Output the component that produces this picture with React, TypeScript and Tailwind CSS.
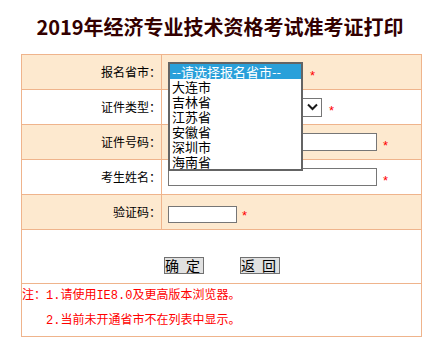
import React from "react";

const B = "border-[#efb48c]";

function Star({ ml = "ml-[7px]" }: { ml?: string }) {
  return (
    <span
      className={`${ml} text-[#ff0000] text-[13px] leading-[13px] translate-y-[3px] font-['Liberation_Sans',sans-serif]`}
    >
      *
    </span>
  );
}

function Label({ text }: { text: string }) {
  return (
    <div
      className={`w-[140px] shrink-0 border-r ${B} flex items-center justify-end text-[12px] leading-[16px] text-black`}
    >
      {text}
    </div>
  );
}

const options = ["--请选择报名省市--", "大连市", "吉林省", "江苏省", "安徽省", "深圳市", "海南省"];

export default function App() {
  return (
    <div className="w-[440px] h-[341px] bg-white overflow-hidden font-['Noto_Sans_CJK_SC',sans-serif]">
      <div className="h-[54px] pt-[12px] text-center text-[20px] font-bold leading-[30px] text-[#330000] whitespace-nowrap">
        2019年经济专业技术资格考试准考证打印
      </div>
      <div className={`ml-[21px] w-[401px] border ${B}`}>
        {/* row 1 */}
        <div className={`flex h-[35px] border-b ${B} bg-[#fde9cf]`}>
          <Label text="报名省市：" />
          <div className="relative flex-1 flex items-center pl-[6px]">
            <div className="w-[135px] h-[19px] border border-[#767676] bg-white" />
            <Star />
            <div className="absolute z-10 left-[6px] top-[7px] w-[135px] h-[109px] border-2 border-[#646464] bg-white">
              {options.map((o, i) => (
                <div
                  key={o}
                  className={`h-[15px] pl-[2px] text-[13px] leading-[15px] whitespace-nowrap ${
                    i === 0 ? "bg-[#29a0da] text-white" : "text-black"
                  }`}
                >
                  {o}
                </div>
              ))}
            </div>
          </div>
        </div>
        {/* row 2 */}
        <div className={`flex h-[35px] border-b ${B} bg-white`}>
          <Label text="证件类型：" />
          <div className="flex-1 flex items-center pl-[6px]">
            <div className="w-[154px] h-[19px] border border-[#767676] bg-white flex items-center justify-end pr-[3px]">
              <svg width="11" height="8" viewBox="0 0 11 8">
                <path d="M1 1.5 L5.5 6 L10 1.5" fill="none" stroke="#1a1a1a" strokeWidth="2" />
              </svg>
            </div>
            <Star />
          </div>
        </div>
        {/* row 3 */}
        <div className={`flex h-[35px] border-b ${B} bg-[#fde9cf]`}>
          <Label text="证件号码：" />
          <div className="flex-1 flex items-center pl-[6px]">
            <div className="w-[209px] h-[18px] border border-[#767676] bg-white" />
            <Star ml="ml-[6px]" />
          </div>
        </div>
        {/* row 4 */}
        <div className={`flex h-[35px] border-b ${B} bg-white`}>
          <Label text="考生姓名：" />
          <div className="flex-1 flex items-center pl-[6px]">
            <div className="w-[209px] h-[18px] border border-[#767676] bg-white" />
            <Star ml="ml-[6px]" />
          </div>
        </div>
        {/* row 5 */}
        <div className={`flex h-[35px] border-b ${B} bg-[#fde9cf]`}>
          <Label text="验证码：" />
          <div className="flex-1 flex items-center pl-[6px]">
            <div className="mt-[5px] w-[69px] h-[17px] border border-[#767676] bg-white" />
            <Star ml="ml-[5px]" />
          </div>
        </div>
        {/* row 6 */}
        <div className={`h-[54px] border-b ${B} bg-white flex justify-center gap-[36px] pt-[27px]`}>
          <button className="w-[40px] h-[17px] border border-[#707070] bg-[#e1e1e1] text-[14px] leading-[15px] tracking-[2px] text-black flex items-center justify-center">
            确 定
          </button>
          <button className="w-[40px] h-[17px] border border-[#707070] bg-[#e1e1e1] text-[14px] leading-[15px] tracking-[2px] text-black flex items-center justify-center">
            返 回
          </button>
        </div>
        {/* notes */}
        <div className="h-[52px] text-[12px] leading-[25px] text-[#ff0000] font-['Liberation_Mono','Noto_Sans_CJK_SC',monospace]">
          <div>注：1.请使用IE8.0及更高版本浏览器。</div>
          <div className="pl-[24px]">2.当前未开通省市不在列表中显示。</div>
        </div>
      </div>
    </div>
  );
}
